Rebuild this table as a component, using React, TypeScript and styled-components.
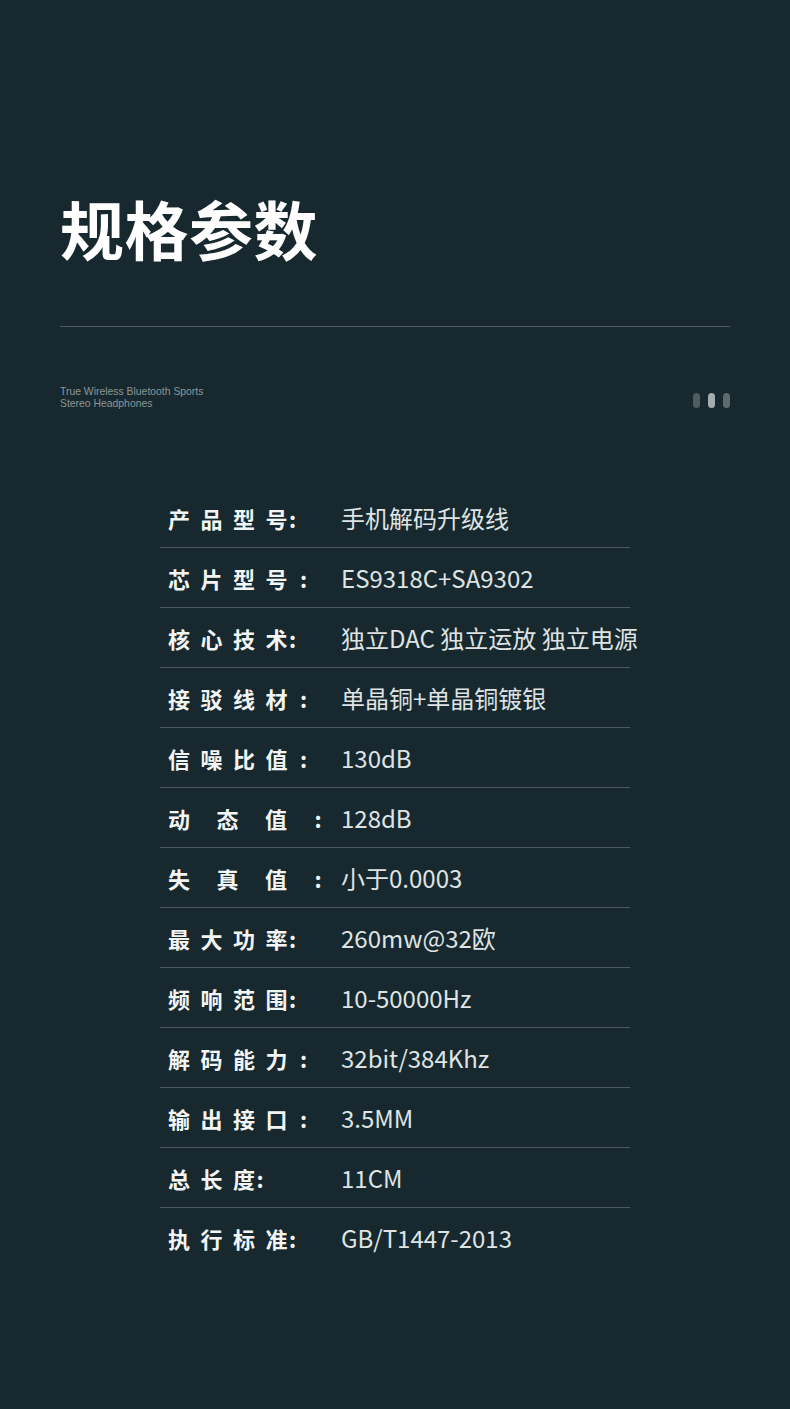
import React from "react";
import styled, { createGlobalStyle } from "styled-components";

const Global = createGlobalStyle`
  html, body { margin: 0; padding: 0; background: #17292e; }
  body { font-family: "Noto Sans CJK SC", "Noto Sans", sans-serif; }
`;

const Page = styled.div`
  width: 790px;
  height: 1409px;
  background: #17292e;
  padding: 195px 60px 0;
  box-sizing: border-box;
  overflow: hidden;
`;

const Title = styled.h1`
  margin: 0;
  font-family: "Noto Sans CJK SC", sans-serif;
  font-weight: 700;
  font-size: 64px;
  line-height: 64px;
  letter-spacing: 0.5px;
  color: #ffffff;
`;

const Divider = styled.div`
  height: 1px;
  background: #4b5a5e;
  margin-top: 67px;
`;

const InfoBar = styled.div`
  display: flex;
  justify-content: space-between;
  align-items: flex-start;
  margin-top: 59px;
`;

const Tagline = styled.div`
  font-family: "Liberation Sans", "Noto Sans", sans-serif;
  font-size: 10.4px;
  line-height: 12px;
  color: #8c9699;
`;

const Dots = styled.div`
  display: flex;
  gap: 8px;
  margin-top: 7px;
`;

const Dot = styled.span<{ $c: string }>`
  width: 7px;
  height: 15px;
  border-radius: 4px;
  background: ${(p) => p.$c};
`;

const Table = styled.div`
  width: 470px;
  margin: 78px auto 0;
`;

const Row = styled.div<{ $last?: boolean }>`
  display: flex;
  align-items: center;
  height: 59px;
  padding-left: 8px;
  border-bottom: 1px solid ${(p) => (p.$last ? "transparent" : "#4a595d")};
`;

const Label = styled.div`
  display: flex;
  align-items: center;
  width: 173px;
  flex: none;
  font-family: "Noto Sans CJK SC", sans-serif;
  font-weight: 700;
  font-size: 22px;
  line-height: 30px;
  color: #f3f5f5;
`;

const Glyph = styled.span<{ $gap: number }>`
  display: inline-block;
  width: 22px;
  margin-right: ${(p) => p.$gap}px;
`;

const Colon = styled.span<{ $ml: number }>`
  display: inline-block;
  width: 8px;
  text-align: center;
  margin-left: ${(p) => p.$ml}px;
`;

const Value = styled.div`
  font-family: "Noto Sans CJK SC", sans-serif;
  font-weight: 400;
  font-size: 24px;
  line-height: 30px;
  color: #dfe3e4;
  white-space: nowrap;
`;

type Kind = "A" | "B" | "C";
const specs: [string, Kind, string][] = [
  ["产品型号", "A", "手机解码升级线"],
  ["芯片型号", "B", "ES9318C+SA9302"],
  ["核心技术", "A", "独立DAC 独立运放 独立电源"],
  ["接驳线材", "B", "单晶铜+单晶铜镀银"],
  ["信噪比值", "B", "130dB"],
  ["动态值", "C", "128dB"],
  ["失真值", "C", "小于0.0003"],
  ["最大功率", "A", "260mw@32欧"],
  ["频响范围", "A", "10-50000Hz"],
  ["解码能力", "B", "32bit/384Khz"],
  ["输出接口", "B", "3.5MM"],
  ["总长度", "A", "11CM"],
  ["执行标准", "A", "GB/T1447-2013"],
];

const gapFor = (k: Kind) => (k === "C" ? 26.5 : 10.5);
const colonFor = (k: Kind) => (k === "A" ? 1 : k === "B" ? 12 : 27);

export default function App() {
  return (
    <>
      <Global />
      <Page>
        <Title>规格参数</Title>
        <Divider />
        <InfoBar>
          <Tagline>
            True Wireless Bluetooth Sports
            <br />
            Stereo Headphones
          </Tagline>
          <Dots>
            <Dot $c="#4e5d61" />
            <Dot $c="#a3acaf" />
            <Dot $c="#5d6a6e" />
          </Dots>
        </InfoBar>
        <Table>
          {specs.map(([label, kind, value], i) => {
            const chars = label.split("");
            return (
              <Row key={label} $last={i === specs.length - 1}>
                <Label>
                  {chars.map((ch, j) => (
                    <Glyph key={j} $gap={j < chars.length - 1 ? gapFor(kind) : 0}>
                      {ch}
                    </Glyph>
                  ))}
                  <Colon $ml={colonFor(kind)}>:</Colon>
                </Label>
                <Value>{value}</Value>
              </Row>
            );
          })}
        </Table>
      </Page>
    </>
  );
}
